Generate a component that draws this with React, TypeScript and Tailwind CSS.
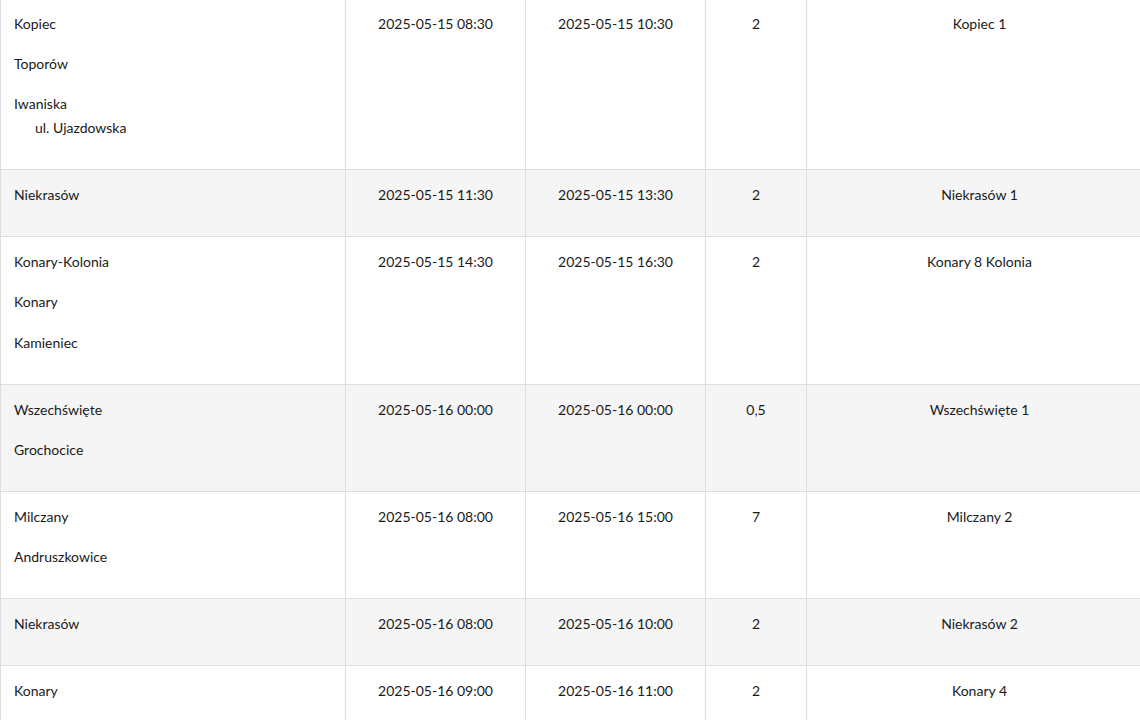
const rows = [
  { places: [['Kopiec'], ['Toporów'], ['Iwaniska', 'ul. Ujazdowska']], from: '2025-05-15 08:30', to: '2025-05-15 10:30', hours: '2', name: 'Kopiec 1' },
  { places: [['Niekrasów']], from: '2025-05-15 11:30', to: '2025-05-15 13:30', hours: '2', name: 'Niekrasów 1' },
  { places: [['Konary-Kolonia'], ['Konary'], ['Kamieniec']], from: '2025-05-15 14:30', to: '2025-05-15 16:30', hours: '2', name: 'Konary 8 Kolonia' },
  { places: [['Wszechświęte'], ['Grochocice']], from: '2025-05-16 00:00', to: '2025-05-16 00:00', hours: '0,5', name: 'Wszechświęte 1' },
  { places: [['Milczany'], ['Andruszkowice']], from: '2025-05-16 08:00', to: '2025-05-16 15:00', hours: '7', name: 'Milczany 2' },
  { places: [['Niekrasów']], from: '2025-05-16 08:00', to: '2025-05-16 10:00', hours: '2', name: 'Niekrasów 2' },
  { places: [['Konary']], from: '2025-05-16 09:00', to: '2025-05-16 11:00', hours: '2', name: 'Konary 4' },
];

export default function App() {
  return (
    <div className="h-[720px] w-[1140px] overflow-hidden bg-white text-[14px] leading-6 text-[#1a1a1a]" style={{ fontFamily: 'Lato, "Open Sans", sans-serif' }}>
      <table className="-mt-[2.5px] w-[1152px] table-fixed border-collapse">
        <colgroup>
          <col className="w-[345px]" />
          <col className="w-[180px]" />
          <col className="w-[180px]" />
          <col className="w-[101px]" />
          <col className="w-[346px]" />
        </colgroup>
        <tbody>
          {rows.map((r, i) => (
            <tr key={i} className={i % 2 ? 'bg-[#f5f5f5]' : 'bg-white'}>
              <td className="border border-[#dddddd] pl-[13px] pr-2 pt-[13px] pb-[12.75px] align-top">
                {r.places.map((p, j) => (
                  <div key={j} className="mb-[16.25px]">
                    <div>{p[0]}</div>
                    {p[1] && <div className="pl-[21px]">{p[1]}</div>}
                  </div>
                ))}
              </td>
              <td className="border border-[#dddddd] pt-[13px] text-center align-top">{r.from}</td>
              <td className="border border-[#dddddd] pt-[13px] text-center align-top">{r.to}</td>
              <td className="border border-[#dddddd] pt-[13px] text-center align-top">{r.hours}</td>
              <td className="border border-[#dddddd] pt-[13px] text-center align-top">{r.name}</td>
            </tr>
          ))}
        </tbody>
      </table>
    </div>
  );
}
